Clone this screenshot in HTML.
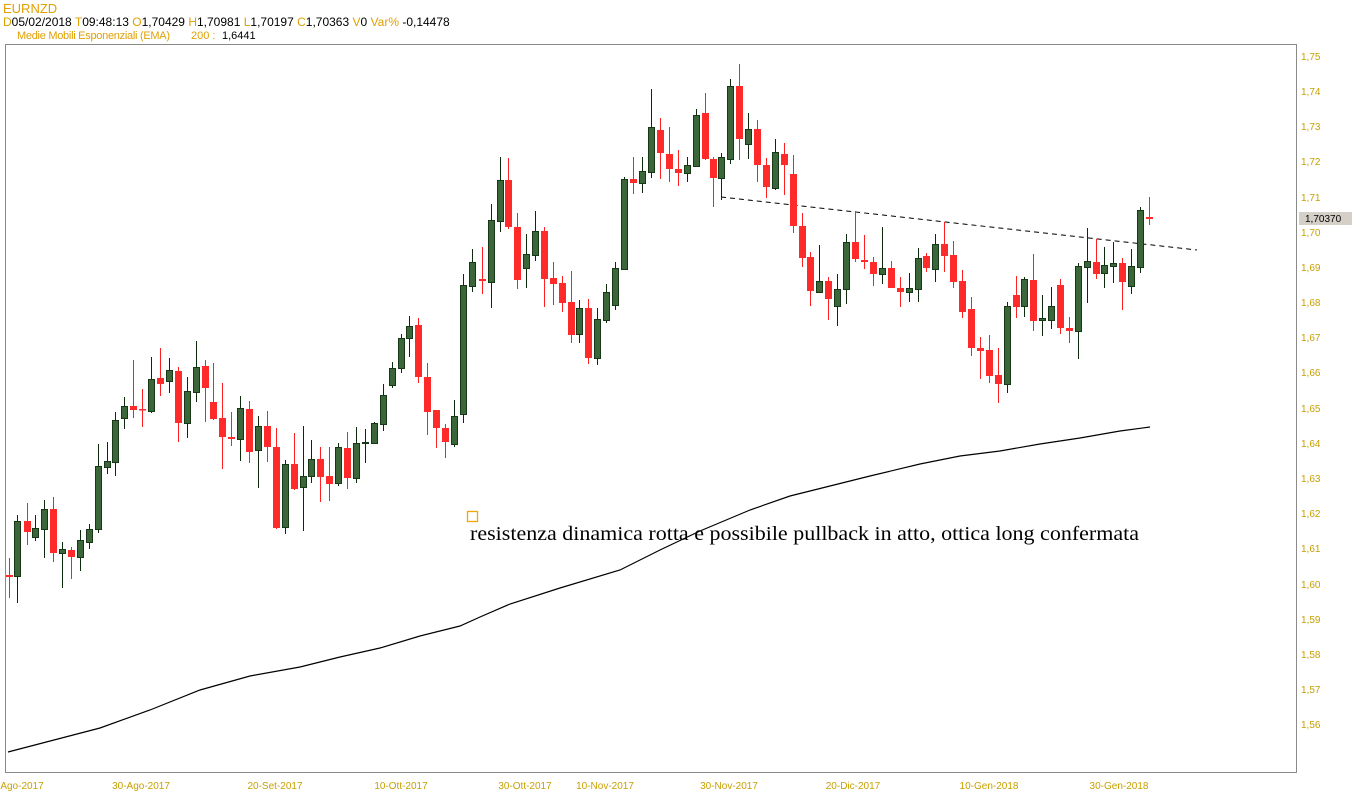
<!DOCTYPE html>
<html><head><meta charset="utf-8"><style>
html,body{margin:0;padding:0;background:#fff;width:1352px;height:801px;overflow:hidden}
svg{display:block}
.ax{font-family:"Liberation Sans",sans-serif;font-size:10px;fill:#c8a000}
.hd{font-family:"Liberation Sans",sans-serif;font-size:11px}
</style></head><body>
<svg width="1352" height="801" viewBox="0 0 1352 801" xmlns="http://www.w3.org/2000/svg">
<text x="3" y="13" class="hd" style="font-size:13px" fill="#e0a000">EURNZD</text>
<text x="3" y="26" class="hd" style="font-size:12px"><tspan fill="#e0a000">D</tspan><tspan fill="#000">05/02/2018 </tspan><tspan fill="#e0a000"> T</tspan><tspan fill="#000">09:48:13 </tspan><tspan fill="#e0a000"> O</tspan><tspan fill="#000">1,70429 </tspan><tspan fill="#e0a000"> H</tspan><tspan fill="#000">1,70981 </tspan><tspan fill="#e0a000"> L</tspan><tspan fill="#000">1,70197 </tspan><tspan fill="#e0a000"> C</tspan><tspan fill="#000">1,70363 </tspan><tspan fill="#e0a000"> V</tspan><tspan fill="#000">0 </tspan><tspan fill="#e0a000"> Var% </tspan><tspan fill="#000">-0,14478</tspan></text>
<text x="17" y="39" class="hd" fill="#e0a000" textLength="153">Medie Mobili Esponenziali (EMA)</text>
<text x="191" y="39" class="hd" fill="#e0a000">200 :</text>
<text x="222" y="39" class="hd" fill="#000">1,6441</text>
<rect x="5.5" y="44.5" width="1291" height="728" fill="none" stroke="#8a8a8a" stroke-width="1"/>
<g class="ax">
<text x="1301" y="60">1,75</text><text x="1301" y="95">1,74</text><text x="1301" y="130">1,73</text><text x="1301" y="165">1,72</text><text x="1301" y="201">1,71</text><text x="1301" y="236">1,70</text><text x="1301" y="271">1,69</text><text x="1301" y="306">1,68</text><text x="1301" y="341">1,67</text><text x="1301" y="376">1,66</text><text x="1301" y="412">1,65</text><text x="1301" y="447">1,64</text><text x="1301" y="482">1,63</text><text x="1301" y="517">1,62</text><text x="1301" y="552">1,61</text><text x="1301" y="588">1,60</text><text x="1301" y="623">1,59</text><text x="1301" y="658">1,58</text><text x="1301" y="693">1,57</text><text x="1301" y="728">1,56</text>
</g>
<rect x="1299" y="212" width="53" height="13" fill="#d4d0c8"/>
<text x="1305" y="222" class="ax" fill="#000" style="fill:#000">1,70370</text>
<g class="ax">
<text x="-3" y="789">-Ago-2017</text>
<text x="141" y="789" text-anchor="middle">30-Ago-2017</text>
<text x="275" y="789" text-anchor="middle">20-Set-2017</text>
<text x="401" y="789" text-anchor="middle">10-Ott-2017</text>
<text x="525" y="789" text-anchor="middle">30-Ott-2017</text>
<text x="605" y="789" text-anchor="middle">10-Nov-2017</text>
<text x="729" y="789" text-anchor="middle">30-Nov-2017</text>
<text x="853" y="789" text-anchor="middle">20-Dic-2017</text>
<text x="989" y="789" text-anchor="middle">10-Gen-2018</text>
<text x="1119" y="789" text-anchor="middle">30-Gen-2018</text>
</g>
<polyline fill="none" stroke="#000" stroke-width="1.2" points="8,752 100,728 150,710 200,690 250,676 300,667 340,657 380,648 420,636 460,626 480,617 510,604 560,588 620,570 660,550 700,531 750,510 790,496 830,486 870,476 920,464 960,456 1000,451 1040,444 1080,438 1120,431 1150,427"/>
<line x1="721" y1="197" x2="1197" y2="250" stroke="#000" stroke-width="1" stroke-dasharray="5,4"/>
<rect x="467.5" y="511.5" width="10" height="10" fill="none" stroke="#f0a800" stroke-width="1.3"/>
<text x="470" y="540" font-family="Liberation Serif, serif" font-size="20" fill="#000" textLength="669" lengthAdjust="spacingAndGlyphs">resistenza dinamica rotta e possibile pullback in atto, ottica long confermata</text>
<g stroke="#ff2020" stroke-width="1">
<path d="M9.5 558V598M27.5 503V545M53.5 497V562M71.5 547V579M133.5 360V418M142.5 389V427M160.5 348V396M178.5 367V442M205.5 360V422M213.5 363V420M222.5 383V469M231.5 412V446M249.5 401V463M267.5 411V462M276.5 428V529M294.5 433V490M320.5 447V502M329.5 447V501M347.5 432V489M418.5 318V383M427.5 363V435M436.5 410V448M445.5 424V458M482.5 247V294M508.5 158V229M517.5 213V289M544.5 227V307M553.5 262V305M562.5 276V312M571.5 271V343M588.5 299V364M633.5 157V194M660.5 118V179M669.5 127V182M678.5 150V186M705.5 93V160M713.5 157V207M739.5 64V160M757.5 120V182M766.5 158V198M784.5 143V195M793.5 155V233M802.5 213V267M810.5 252V306M828.5 277V320M855.5 211V262M864.5 235V269M873.5 257V286M891.5 261V288M900.5 277V307M926.5 253V272M944.5 222V272M953.5 241V288M962.5 270V318M971.5 297V356M980.5 337V379M989.5 335V383M998.5 348V403M1016.5 276V318M1033.5 254V331M1060.5 279V334M1069.5 317V343M1096.5 239V279M1122.5 258V310M1149.5 197V225"/>
</g>
<g fill="#ff2a2a">
<rect x="6" y="575" width="7" height="2"/><rect x="24" y="521" width="7" height="11"/><rect x="50" y="509" width="7" height="44"/><rect x="68" y="550" width="7" height="7"/><rect x="130" y="406" width="7" height="4"/><rect x="139" y="409" width="7" height="1.5"/><rect x="157" y="378" width="7" height="6"/><rect x="175" y="371" width="7" height="52"/><rect x="202" y="366" width="7" height="22"/><rect x="210" y="402" width="7" height="17"/><rect x="219" y="418" width="7" height="19"/><rect x="228" y="437" width="7" height="2"/><rect x="246" y="409" width="7" height="43"/><rect x="264" y="426" width="7" height="21"/><rect x="273" y="447" width="7" height="81"/><rect x="291" y="464" width="7" height="25"/><rect x="317" y="459" width="7" height="18"/><rect x="326" y="476" width="7" height="8"/><rect x="344" y="448" width="7" height="30"/><rect x="415" y="325" width="7" height="52"/><rect x="424" y="377" width="7" height="35"/><rect x="433" y="410" width="7" height="18"/><rect x="442" y="428" width="7" height="14"/><rect x="479" y="279" width="7" height="2"/><rect x="505" y="180" width="7" height="47"/><rect x="514" y="227" width="7" height="53"/><rect x="541" y="231" width="7" height="48"/><rect x="550" y="278" width="7" height="6"/><rect x="559" y="283" width="7" height="20"/><rect x="568" y="302" width="7" height="33"/><rect x="585" y="308" width="7" height="50"/><rect x="630" y="179" width="7" height="4"/><rect x="657" y="130" width="7" height="23"/><rect x="666" y="154" width="7" height="15"/><rect x="675" y="169" width="7" height="4"/><rect x="702" y="113" width="7" height="46"/><rect x="710" y="159" width="7" height="19"/><rect x="736" y="86" width="7" height="53"/><rect x="754" y="129" width="7" height="36"/><rect x="763" y="165" width="7" height="22"/><rect x="781" y="154" width="7" height="11"/><rect x="790" y="174" width="7" height="52"/><rect x="799" y="226" width="7" height="32"/><rect x="807" y="257" width="7" height="34"/><rect x="825" y="281" width="7" height="18"/><rect x="852" y="242" width="7" height="17"/><rect x="861" y="260" width="7" height="2"/><rect x="870" y="262" width="7" height="12"/><rect x="888" y="268" width="7" height="20"/><rect x="897" y="288" width="7" height="4"/><rect x="923" y="256" width="7" height="12"/><rect x="941" y="244" width="7" height="12"/><rect x="950" y="255" width="7" height="27"/><rect x="959" y="281" width="7" height="31"/><rect x="968" y="309" width="7" height="39"/><rect x="977" y="348" width="7" height="3"/><rect x="986" y="350" width="7" height="26"/><rect x="995" y="375" width="7" height="9"/><rect x="1013" y="295" width="7" height="12"/><rect x="1030" y="280" width="7" height="41"/><rect x="1057" y="285" width="7" height="43"/><rect x="1066" y="328" width="7" height="3"/><rect x="1093" y="262" width="7" height="12"/><rect x="1119" y="263" width="7" height="19"/><rect x="1146" y="217" width="7" height="2"/>
</g>
<g stroke="#0c2a0c" stroke-width="1">
<path d="M17.5 515V603M35.5 515V541M44.5 500V558M62.5 542V588M80.5 530V571M89.5 524V549M98.5 444V533M107.5 442V474M115.5 412V476M124.5 397V429M151.5 357V413M169.5 358V393M187.5 377V438M196.5 341V402M240.5 396V461M258.5 416V488M285.5 460V534M303.5 426V531M311.5 440V483M338.5 443V486M356.5 427V483M365.5 429V463M374.5 422V443M383.5 384V431M392.5 362V388M401.5 334V373M409.5 316V357M454.5 400V447M463.5 274V423M472.5 249V292M491.5 204V308M500.5 157V232M526.5 234V288M535.5 211V261M579.5 300V343M597.5 308V365M606.5 284V323M615.5 262V310M624.5 177V269M642.5 157V193M651.5 89V178M687.5 157V182M696.5 109V167M721.5 153V200M730.5 79V164M748.5 113V159M775.5 139V190M819.5 245V293M837.5 274V326M846.5 234V304M882.5 227V284M909.5 273V302M918.5 248V302M935.5 234V282M1007.5 302V393M1024.5 277V317M1042.5 295V336M1051.5 287V329M1078.5 263V359M1087.5 228V303M1104.5 247V288M1113.5 242V283M1131.5 249V294M1140.5 207V273"/>
</g>
<g fill="#3a663a" stroke="#163816" stroke-width="1">
<rect x="14.5" y="521.5" width="6" height="55"/><rect x="32.5" y="528.5" width="6" height="9"/><rect x="41.5" y="509.5" width="6" height="20"/><rect x="59.5" y="549.5" width="6" height="4"/><rect x="77.5" y="540.5" width="6" height="17"/><rect x="86.5" y="529.5" width="6" height="13"/><rect x="95.5" y="466.5" width="6" height="63"/><rect x="104.5" y="461.5" width="6" height="6"/><rect x="112.5" y="420.5" width="6" height="42"/><rect x="121.5" y="406.5" width="6" height="12"/><rect x="148.5" y="379.5" width="6" height="32"/><rect x="166.5" y="370.5" width="6" height="11"/><rect x="184.5" y="391.5" width="6" height="32"/><rect x="193.5" y="367.5" width="6" height="25"/><rect x="237.5" y="408.5" width="6" height="31"/><rect x="255.5" y="426.5" width="6" height="24"/><rect x="282.5" y="464.5" width="6" height="63"/><rect x="300.5" y="476.5" width="6" height="11"/><rect x="308.5" y="459.5" width="6" height="17"/><rect x="335.5" y="447.5" width="6" height="36"/><rect x="353.5" y="443.5" width="6" height="35"/><rect x="362.5" y="442.5" width="6" height="1"/><rect x="371.5" y="423.5" width="6" height="20"/><rect x="380.5" y="395.5" width="6" height="29"/><rect x="389.5" y="368.5" width="6" height="17"/><rect x="398.5" y="338.5" width="6" height="30"/><rect x="406.5" y="326.5" width="6" height="12"/><rect x="451.5" y="416.5" width="6" height="28"/><rect x="460.5" y="285.5" width="6" height="129"/><rect x="469.5" y="262.5" width="6" height="24"/><rect x="488.5" y="220.5" width="6" height="62"/><rect x="497.5" y="180.5" width="6" height="41"/><rect x="523.5" y="254.5" width="6" height="14"/><rect x="532.5" y="231.5" width="6" height="24"/><rect x="576.5" y="308.5" width="6" height="26"/><rect x="594.5" y="319.5" width="6" height="39"/><rect x="603.5" y="292.5" width="6" height="28"/><rect x="612.5" y="268.5" width="6" height="37"/><rect x="621.5" y="179.5" width="6" height="90"/><rect x="639.5" y="171.5" width="6" height="12"/><rect x="648.5" y="127.5" width="6" height="45"/><rect x="684.5" y="165.5" width="6" height="8"/><rect x="693.5" y="115.5" width="6" height="51"/><rect x="718.5" y="157.5" width="6" height="21"/><rect x="727.5" y="86.5" width="6" height="73"/><rect x="745.5" y="129.5" width="6" height="15"/><rect x="772.5" y="152.5" width="6" height="36"/><rect x="816.5" y="281.5" width="6" height="11"/><rect x="834.5" y="289.5" width="6" height="17"/><rect x="843.5" y="242.5" width="6" height="47"/><rect x="879.5" y="268.5" width="6" height="6"/><rect x="906.5" y="288.5" width="6" height="4"/><rect x="915.5" y="258.5" width="6" height="31"/><rect x="932.5" y="244.5" width="6" height="25"/><rect x="1004.5" y="306.5" width="6" height="78"/><rect x="1021.5" y="279.5" width="6" height="27"/><rect x="1039.5" y="318.5" width="6" height="2"/><rect x="1048.5" y="306.5" width="6" height="14"/><rect x="1075.5" y="266.5" width="6" height="65"/><rect x="1084.5" y="261.5" width="6" height="6"/><rect x="1101.5" y="265.5" width="6" height="8"/><rect x="1110.5" y="263.5" width="6" height="3"/><rect x="1128.5" y="266.5" width="6" height="20"/><rect x="1137.5" y="210.5" width="6" height="57"/>
</g>
</svg>
</body></html>
